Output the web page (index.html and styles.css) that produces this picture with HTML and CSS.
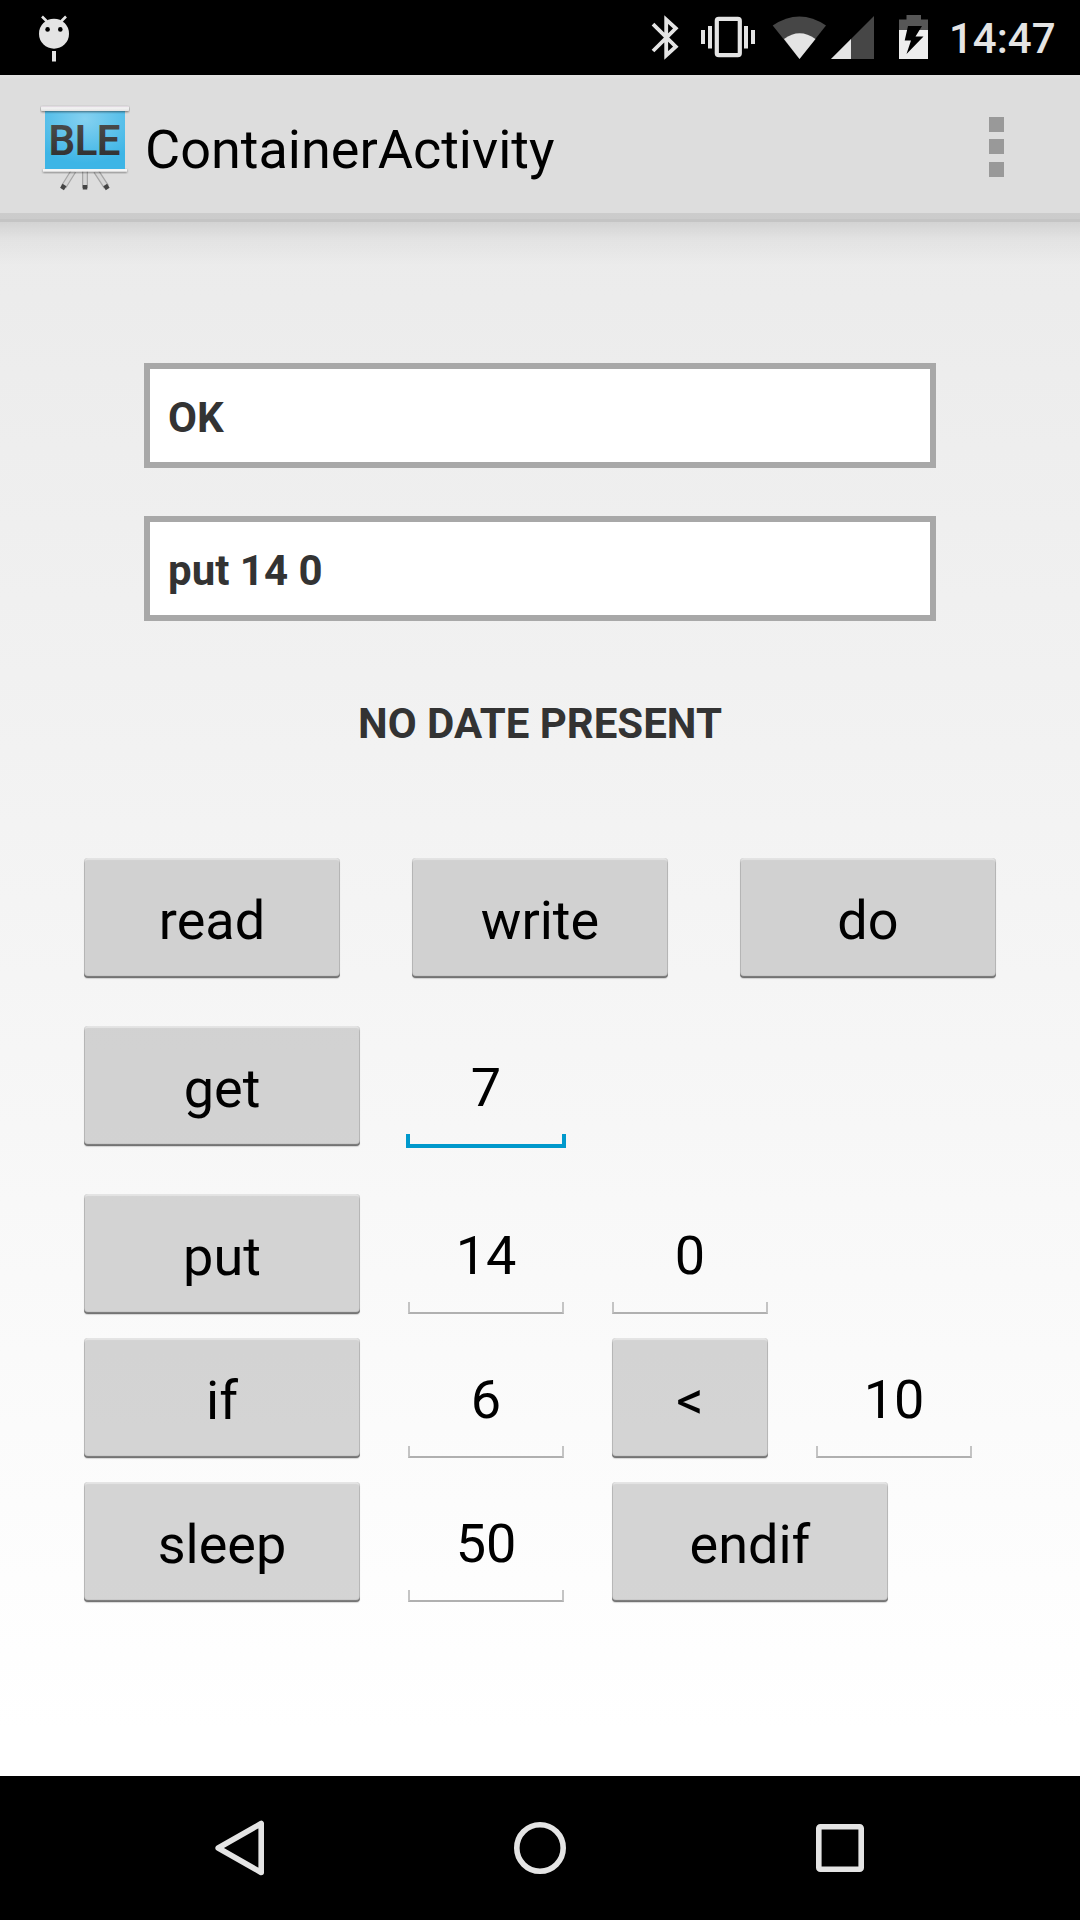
FILE: index.html
```html
<!DOCTYPE html>
<html lang="en">
<head>
<meta charset="utf-8">
<title>ContainerActivity</title>
<link rel="stylesheet" href="styles.css">
</head>
<body>
<div class="screen">
  <header class="status-bar">
    <svg class="status-icons" width="940" height="75" viewBox="0 0 940 75">
      <!-- debug robot -->
      <g fill="#e4e4e4">
        <circle cx="54" cy="33.7" r="15"/>
        <path d="M42 16.5l5 5M66 16.5l-5 5" stroke="#e4e4e4" stroke-width="2.6"/>
        <rect x="52" y="51" width="4" height="10.5"/>
      </g>
      <circle cx="47.6" cy="29.4" r="2.3"/>
      <circle cx="60.3" cy="29.4" r="2.3"/>
      <!-- bluetooth -->
      <path d="M653 24.2L675.800 46.700L666.200 55.500V19.500L675.800 28.300L653 51" fill="none" stroke="#e4e4e4" stroke-width="3.8"/>
      <!-- vibrate -->
      <rect x="716.8" y="18.8" width="23" height="36.4" rx="2" fill="none" stroke="#e4e4e4" stroke-width="4.2"/>
      <path d="M701 30h4v14h-4zM708 26h4v22.500h-4zM744 26h4v22.500h-4zM751 30h4v14h-4z" fill="#e4e4e4"/>
      <!-- wifi -->
      <path d="M772.700 25.500Q799.500 7.500 826 25.500L799.500 59z" fill="#464646"/>
      <path d="M784 39Q799.500 27.500 815.500 39L799.500 59z" fill="#e4e4e4"/>
      <!-- cell signal -->
      <path d="M831 59L874 16V59z" fill="#464646"/>
      <path d="M831 59L851 39V59z" fill="#e4e4e4"/>
      <!-- battery -->
      <path d="M899 30V19.500H906.500V15H921V19.500H928V30z" fill="#575757"/>
      <rect x="899" y="30" width="29" height="29" fill="#eeeeee"/>
      <path d="M908 26H922L915.500 36.500H923.500L906.500 54L911 40.500H904.700z"/>
    </svg>
    <span class="clock">14:47</span>
  </header>

  <div class="action-bar">
    <svg class="app-icon" width="90" height="90" viewBox="0 0 90 90">
      <defs>
        <radialGradient id="sheet" cx="50%" cy="15%" r="75%">
          <stop offset="0" stop-color="#85d1f0"/>
          <stop offset="1" stop-color="#3db5e6"/>
        </radialGradient>
        <linearGradient id="ink" x1="0" y1="0" x2="0" y2="1">
          <stop offset="0" stop-color="#505050"/>
          <stop offset="1" stop-color="#2c2c2c"/>
        </linearGradient>
        <linearGradient id="rail" x1="0" y1="0" x2="0" y2="1">
          <stop offset="0" stop-color="#d9cfd9"/>
          <stop offset=".35" stop-color="#f4f4f4"/>
          <stop offset="1" stop-color="#e2e2e2"/>
        </linearGradient>
        <filter id="soft" x="-10%" y="-30%" width="120%" height="200%">
          <feDropShadow dx="0" dy="1" stdDeviation="1" flood-color="#000" flood-opacity=".5"/>
        </filter>
      </defs>
      <!-- tripod legs: darker edge under a light core, rubber feet -->
      <path d="M33.500 68L23.500 84M45 68V85M56 68L66.500 84" stroke="#a6a6a6" stroke-width="6"/>
      <path d="M33.500 68L23.500 84M45 68V85M56 68L66.500 84" stroke="#d6d6d6" stroke-width="3.500"/>
      <path d="M24.500 82l-2.500 4M45 82v4.500M65.200 82l2.500 4" stroke="#444" stroke-width="4.500"/>
      <rect x="3" y="66" width="84" height="2.500" fill="#f4f4f4" filter="url(#soft)"/>
      <rect x="5" y="7" width="80" height="59" fill="url(#sheet)"/>
      <rect x="1" y="3" width="88" height="5" rx="1" fill="url(#rail)" filter="url(#soft)"/>
      <text x="44.500" y="51.500" class="app-icon-label" text-anchor="middle" textLength="72" fill="url(#ink)">BLE</text>
    </svg>
    <h1 class="title">ContainerActivity</h1>
    <div class="overflow"><i></i><i></i><i></i></div>
  </div>

  <main class="content">
    <div class="field">OK</div>
    <div class="field">put 14 0</div>
    <p class="notice">NO DATE PRESENT</p>

    <div class="row row-actions">
      <button class="btn">read</button>
      <button class="btn">write</button>
      <button class="btn">do</button>
    </div>
    <div class="row">
      <button class="btn wide">get</button>
      <div class="entry focused">7</div>
    </div>
    <div class="row">
      <button class="btn wide">put</button>
      <div class="entry">14</div>
      <div class="entry">0</div>
    </div>
    <div class="row tight">
      <button class="btn wide">if</button>
      <div class="entry">6</div>
      <button class="btn small">&lt;</button>
      <div class="entry">10</div>
    </div>
    <div class="row tight">
      <button class="btn wide">sleep</button>
      <div class="entry">50</div>
      <button class="btn wide">endif</button>
    </div>
  </main>

  <nav class="nav-bar">
    <svg width="60" height="60" viewBox="0 0 60 60"><path d="M51.200 5.500V54.500L8.200 30z" class="nav-stroke"/></svg>
    <svg width="60" height="60" viewBox="0 0 60 60"><circle cx="30" cy="30" r="23.200" class="nav-stroke"/></svg>
    <svg width="60" height="60" viewBox="0 0 60 60"><rect x="8.800" y="8.800" width="42.400" height="42.400" rx="1.500" class="nav-stroke"/></svg>
  </nav>
</div>
</body>
</html>
```
FILE: styles.css
```css
*, *::after { box-sizing: border-box; }

body {
  margin: 0;
  font-family: Roboto, "Noto Sans", sans-serif;
  color: #000;
}

.screen {
  display: flex;
  flex-direction: column;
  width: 1080px;
  height: 1920px;
  overflow: hidden;
}

.status-bar {
  display: flex;
  height: 75px;
  background: #000;
}

.status-icons { flex: none; }

.clock {
  margin-left: 9px;
  padding-top: 1px;
  font-size: 42px;
  font-weight: 500;
  line-height: 75px;
  color: #e4e4e4;
}

.action-bar {
  display: flex;
  align-items: flex-start;
  height: 147px;
  padding: 28px 76px 0 40px;
  background: linear-gradient(#e2e2e2 0, #ddd 5px, #ddd 138px, #ccc 138px, #cbcbcb 144px, #c4c4c4 144px);
}

.app-icon { flex: none; }

.app-icon-label {
  font-size: 42px;
  font-weight: 600;
}

.title {
  flex: 1;
  margin: 0 0 0 15px;
  font-size: 54px;
  font-weight: 400;
  line-height: 93px;
}

.overflow {
  display: flex;
  flex-direction: column;
  gap: 7px;
  padding-top: 14px;
}

.overflow i {
  width: 15px;
  height: 15px;
  background: #999;
}

.overflow i:last-child { margin-top: 1px; }

.content {
  flex: 1;
  padding-top: 141px;
  background:
    linear-gradient(rgba(0, 0, 0, .1), rgba(0, 0, 0, .035) 18px, transparent 44px) no-repeat,
    linear-gradient(#ebebeb, #fff 97%);
}

.field {
  width: 792px;
  height: 105px;
  margin: 0 auto 48px;
  padding: 2px 18px 0;
  border: 6px solid #a8a8a8;
  background: #fff;
  font-size: 42px;
  font-weight: 700;
  line-height: 93px;
  color: #333;
}

.notice {
  margin: 0 0 109px;
  padding-top: 30px;
  font-size: 42px;
  font-weight: 700;
  line-height: 50px;
  text-align: center;
  color: #333;
}

.row {
  display: flex;
  gap: 48px;
  margin-bottom: 48px;
  padding-left: 84px;
}

.row:has(+ .tight), .tight { margin-bottom: 24px; }

.row-actions { gap: 72px; }

.btn {
  width: 256px;
  height: 120px;
  padding: 5px 0 0;
  border: 0;
  border-radius: 4px;
  background: rgba(188, 188, 188, .63);
  box-shadow:
    inset 0 2px 1px rgba(255, 255, 255, .4),
    inset 0 -2px 1px rgba(0, 0, 0, .45),
    inset 1px 0 0 rgba(0, 0, 0, .1),
    inset -1px 0 0 rgba(0, 0, 0, .1),
    0 1px 1px rgba(0, 0, 0, .15);
  font: 400 54px/115px Roboto, "Noto Sans", sans-serif;
  color: #000;
}

.wide { width: 276px; }

.small { width: 156px; }

.entry {
  position: relative;
  width: 156px;
  height: 120px;
  padding-top: 3px;
  font-size: 54px;
  line-height: 117px;
  text-align: center;
}

.entry::after {
  content: "";
  position: absolute;
  inset: auto 0 0;
  height: 12px;
  border: 2px solid #c4c4c4;
  border-top: 0;
  border-bottom-color: #b0b0b0;
}

.entry.focused::after {
  inset: auto -2px -2px;
  height: 14px;
  border: 4px solid #0099cc;
  border-top: 0;
}

.nav-bar {
  display: flex;
  justify-content: center;
  align-items: center;
  gap: 240px;
  height: 144px;
  background: #000;
}

.nav-stroke {
  fill: none;
  stroke: #e4e4e4;
  stroke-width: 5.6;
  stroke-linejoin: round;
}
```
